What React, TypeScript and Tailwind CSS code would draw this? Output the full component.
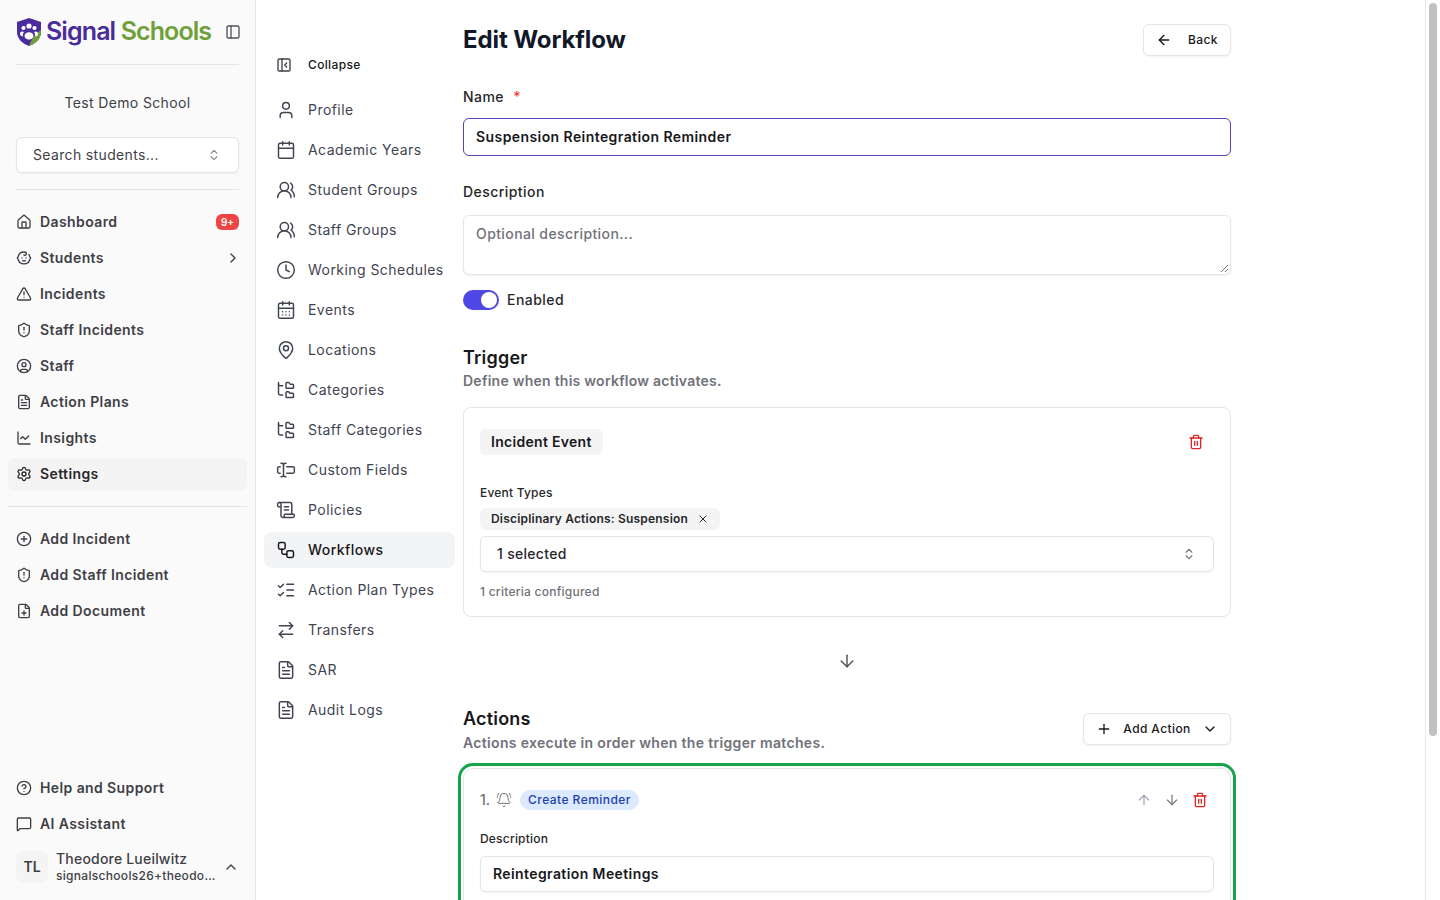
import React from 'react';
import {
  ArrowDown, ArrowLeft, ArrowRightLeft, ArrowUp, Baby, BellRing, Calendar, CalendarDays, ChartLine, ChevronDown,
  ChevronRight, ChevronUp, ChevronsUpDown, CircleHelp, CirclePlus, CircleUser, Clock, FilePlus, FileText, FolderTree,
  House, ListChecks, MapPin, MessageSquare, PanelLeft, PanelLeftClose, Plus, ScrollText, Settings, ShieldAlert,
  TextCursorInput, Trash2, TriangleAlert, User, UsersRound, Workflow, X,
} from 'lucide-react';

const mainNav = [
  { label: 'Dashboard', icon: House },
  { label: 'Students', icon: Baby },
  { label: 'Incidents', icon: TriangleAlert },
  { label: 'Staff Incidents', icon: ShieldAlert },
  { label: 'Staff', icon: CircleUser },
  { label: 'Action Plans', icon: FileText },
  { label: 'Insights', icon: ChartLine },
  { label: 'Settings', icon: Settings },
];

const addNav = [
  { label: 'Add Incident', icon: CirclePlus },
  { label: 'Add Staff Incident', icon: ShieldAlert },
  { label: 'Add Document', icon: FilePlus },
];

const footerNav = [
  { label: 'Help and Support', icon: CircleHelp },
  { label: 'AI Assistant', icon: MessageSquare },
];

const settingsNav = [
  { label: 'Profile', icon: User },
  { label: 'Academic Years', icon: Calendar },
  { label: 'Student Groups', icon: UsersRound },
  { label: 'Staff Groups', icon: UsersRound },
  { label: 'Working Schedules', icon: Clock },
  { label: 'Events', icon: CalendarDays },
  { label: 'Locations', icon: MapPin },
  { label: 'Categories', icon: FolderTree },
  { label: 'Staff Categories', icon: FolderTree },
  { label: 'Custom Fields', icon: TextCursorInput },
  { label: 'Policies', icon: ScrollText },
  { label: 'Workflows', icon: Workflow },
  { label: 'Action Plan Types', icon: ListChecks },
  { label: 'Transfers', icon: ArrowRightLeft },
  { label: 'SAR', icon: FileText },
  { label: 'Audit Logs', icon: FileText },
];

const SideLink: React.FC<{ label: string; icon: React.ElementType; active?: boolean; children?: React.ReactNode }> = ({ label, icon: Icon, active, children }) => (
  <div className={`flex h-8 items-center gap-2 rounded-md px-2 text-sm font-semibold tracking-[0.4px] ${active ? 'bg-[#f4f4f5] text-[#27272a]' : 'text-[#3f3f46]'}`}>
    <Icon size={16} strokeWidth={2} className="shrink-0" />
    <span className="flex-1 truncate">{label}</span>
    {children}
  </div>
);

const Logo = () => (
  <svg width="26" height="30" viewBox="0 0 26 30" className="shrink-0">
    <path d="M13 1 L25 5 V15 C25 22 19 27 13 29 C7 27 1 22 1 15 V5 Z" fill="#4a2c9c" />
    <path d="M25 13 V15 C25 22 19 27 13 29 C15 23 19 17 25 13 Z" fill="#6fa03a" />
    <circle cx="13" cy="9" r="2.6" fill="#fff" />
    <circle cx="7.5" cy="11" r="2.1" fill="#fff" />
    <circle cx="18.5" cy="11" r="2.1" fill="#fff" />
    <path d="M8.5 19 C8.5 14 17.5 14 17.5 19 C17.5 21 15 22.5 13 22.5 C11 22.5 8.5 21 8.5 19 Z" fill="#fff" />
    <path d="M4 17 C4 14 7 14 8 15 C7 16 6.6 18 7 19.5 C5.5 19.5 4 18.5 4 17 Z" fill="#fff" />
    <path d="M22 17 C22 14 19 14 18 15 C19 16 19.4 18 19 19.5 C20.5 19.5 22 18.5 22 17 Z" fill="#fff" />
  </svg>
);

const Sidebar = () => (
  <aside className="flex h-full w-[256px] shrink-0 flex-col border-r border-[#e5e5e5] bg-[#fafafa]">
    <div className="mx-4 flex h-[65px] items-center border-b border-[#e5e5e5] pb-[1px]">
      <Logo />
      <span className="ml-[4px] text-[25px] font-semibold tracking-[-0.9px] whitespace-nowrap text-[#4a2c9c]">
        Signal <span className="text-[#6fa03a]">Schools</span>
      </span>
      <PanelLeft size={16} strokeWidth={2} className="-mr-[2px] ml-auto text-[#52525b]" />
    </div>
    <div className="mt-[28px] text-center text-sm leading-5 tracking-[0.35px] text-[#3f3f46]">Test Demo School</div>
    <div className="mx-4 mt-[24px] flex h-9 items-center justify-between rounded-md border border-[#e5e5e5] bg-white pr-[17px] pl-4 text-sm tracking-[0.35px] text-[#3f3f46] shadow-xs">
      Search students...
      <ChevronsUpDown size={14} className="text-[#8a8a93]" />
    </div>
    <div className="mx-4 mt-4 border-t border-[#e5e5e5]" />
    <nav className="mt-4 flex flex-col gap-1 px-2">
      {mainNav.map((item) => (
        <SideLink key={item.label} label={item.label} icon={item.icon} active={item.label === 'Settings'}>
          {item.label === 'Dashboard' && <span className="rounded-md bg-[#ef4444] px-[5px] text-[10px] leading-4 font-semibold tracking-normal text-white">9+</span>}
          {item.label === 'Students' && <ChevronRight size={16} className="-mr-[2px] text-[#3f3f46]" />}
        </SideLink>
      ))}
    </nav>
    <div className="mx-2 mt-4 border-t border-[#e5e5e5]" />
    <nav className="mt-4 flex flex-col gap-1 px-2">
      {addNav.map((item) => <SideLink key={item.label} label={item.label} icon={item.icon} />)}
    </nav>
    <nav className="mt-auto flex flex-col gap-1 px-2">
      {footerNav.map((item) => <SideLink key={item.label} label={item.label} icon={item.icon} />)}
    </nav>
    <div className="mt-[10px] mb-[16px] flex items-center gap-2 px-4">
      <div className="flex size-8 shrink-0 items-center justify-center rounded-lg bg-[#f4f4f5] text-sm font-semibold text-[#3f3f46]">TL</div>
      <div className="min-w-0 flex-1">
        <div className="text-sm leading-[18px] font-medium tracking-[0.2px] whitespace-nowrap text-[#3f3f46]">Theodore Lueilwitz</div>
        <div className="text-xs leading-4 font-medium tracking-[0.3px] whitespace-nowrap text-[#3f3f46]">signalschools26+theodo…</div>
      </div>
      <ChevronUp size={16} className="ml-1 shrink-0 text-[#3f3f46]" />
    </div>
  </aside>
);

const SettingsNav = () => (
  <nav className="flex w-[191px] shrink-0 flex-col">
    <div className="mt-[49px] mb-[11px] flex h-8 items-center gap-4 px-3 text-xs font-medium tracking-[0.35px] text-[#18181b]">
      <PanelLeftClose size={16} className="shrink-0 text-[#3f3f46]" />
      <span>Collapse</span>
    </div>
    <div className="flex flex-col gap-1">
      {settingsNav.map(({ label, icon: Icon }) => (
        <div key={label} className={`flex h-9 items-center gap-3 rounded-lg px-3 text-sm tracking-[0.45px] ${label === 'Workflows' ? 'bg-[#f3f4f6] font-medium text-[#18181b]' : 'text-[#3f4451]'}`}>
          <Icon size={20} strokeWidth={1.75} className="shrink-0" />
          <span className="whitespace-nowrap">{label}</span>
        </div>
      ))}
    </div>
  </nav>
);

const fieldLabel = 'text-sm leading-5 font-medium tracking-[0.45px] text-[#27272a]';
const smallButton = 'flex h-8 items-center rounded-md border border-[#e5e5e5] bg-white text-xs font-medium tracking-[0.4px] text-[#18181b] shadow-xs';

const Editor = () => (
  <main className="ml-2 w-[768px] shrink-0 pt-6">
    <div className="flex h-8 items-center justify-between">
      <h1 className="text-2xl font-bold tracking-[-0.1px] text-[#111827]">Edit Workflow</h1>
      <button className={`${smallButton} w-[88px] gap-4 px-3`}>
        <ArrowLeft size={16} strokeWidth={2} />
        Back
      </button>
    </div>

    <div className={`mt-[31px] ${fieldLabel}`}>Name <span className="ml-[5px] text-[#ef4444]">*</span></div>
    <div className="mt-[11px] flex h-[38px] items-center rounded-md border border-[#4f46b8] bg-white px-3 text-sm font-semibold tracking-[0.42px] text-[#18181b]">
      Suspension Reintegration Reminder
    </div>

    <div className={`mt-[26px] ${fieldLabel}`}>Description</div>
    <div className="relative mt-[13px] h-[60px] rounded-md border border-[#e5e5e5] bg-white px-3 pt-[8px] text-sm font-medium tracking-[0.4px] text-[#71717a] shadow-xs">
      Optional description...
      <svg width="10" height="10" viewBox="0 0 10 10" className="absolute right-[1px] bottom-[1px] text-[#71717a]">
        <path d="M9 2 L2 9 M9 6 L6 9" stroke="currentColor" strokeWidth="1" />
      </svg>
    </div>

    <div className="mt-[15px] flex items-center gap-2">
      <div className="flex h-5 w-9 items-center justify-end rounded-full bg-[#4f46e5] p-[2px]">
        <div className="size-4 rounded-full bg-white" />
      </div>
      <span className={fieldLabel}>Enabled</span>
    </div>

    <h2 className="mt-[34px] text-lg leading-[27px] font-semibold tracking-[0.2px] text-[#18181b]">Trigger</h2>
    <p className="text-sm leading-5 font-semibold tracking-[0.25px] text-[#71717a]">Define when this workflow activates.</p>

    <section className="mt-4 h-[210px] rounded-lg border border-[#e5e5e5] bg-white px-4 pt-[21px]">
      <div className="flex items-center justify-between pr-[10px]">
        <span className="rounded-md bg-[#f4f4f5] px-[11px] py-[3px] text-sm leading-5 font-semibold tracking-[0.3px] text-[#18181b]">Incident Event</span>
        <Trash2 size={16} className="text-[#dc2626]" />
      </div>
      <div className="mt-[30px] text-xs leading-4 font-medium tracking-[0.2px] text-[#27272a]">Event Types</div>
      <div className="mt-[7px] flex h-[22px] w-fit items-center gap-[9px] rounded-md bg-[#f4f4f5] pr-[11px] pl-[11px] text-xs font-semibold tracking-[0.2px] text-[#27272a]">
        Disciplinary Actions: Suspension
        <X size={12} />
      </div>
      <div className="mt-[6px] flex h-9 items-center justify-between rounded-md border border-[#e5e5e5] bg-white pr-[17px] pl-4 text-sm font-medium tracking-[0.3px] text-[#27272a] shadow-xs">
        1 selected
        <ChevronsUpDown size={14} className="text-[#71717a]" />
      </div>
      <div className="mt-[12px] text-xs leading-4 font-medium tracking-[0.25px] text-[#71717a]">1 criteria configured</div>
    </section>

    <div className="mt-[34px] flex justify-center">
      <ArrowDown size={20} strokeWidth={1.75} className="text-[#52525b]" />
    </div>

    <div className="mt-[34px] flex items-end justify-between">
      <div>
        <h2 className="text-lg leading-7 font-semibold tracking-[0.2px] text-[#18181b]">Actions</h2>
        <p className="text-sm leading-5 font-semibold tracking-[0.33px] text-[#71717a]">Actions execute in order when the trigger matches.</p>
      </div>
      <button className={`${smallButton} mb-2 w-[148px] justify-between px-3`}>
        <Plus size={16} strokeWidth={2} />
        Add Action
        <ChevronDown size={16} strokeWidth={2} />
      </button>
    </div>

    <section className="mt-[15px] h-[300px] rounded-[10px] border border-[#e5e5e5] bg-white px-4 pt-[21px] outline-[3px] outline-offset-2 outline-[#16a34a]">
      <div className="flex h-5 items-center">
        <span className="text-sm font-medium text-[#71717a]">1.</span>
        <BellRing size={16} strokeWidth={1.5} className="ml-[6px] text-[#71717a]" />
        <span className="ml-[8px] rounded-full bg-[#dbeafe] px-2 text-xs leading-5 font-medium tracking-[0.45px] text-[#1e40af]">Create Reminder</span>
        <div className="ml-auto flex items-center gap-3 pr-[6px]">
          <ArrowUp size={16} strokeWidth={1.75} className="text-[#9ca3af]" />
          <ArrowDown size={16} strokeWidth={1.75} className="text-[#71717a]" />
          <Trash2 size={16} className="text-[#dc2626]" />
        </div>
      </div>
      <div className="mt-[21px] text-xs leading-4 font-medium tracking-[0.2px] text-[#27272a]">Description</div>
      <div className="mt-[9px] flex h-9 items-center rounded-md border border-[#e5e5e5] bg-white px-3 text-sm font-semibold tracking-[0.4px] text-[#18181b] shadow-xs">
        Reintegration Meetings
      </div>
    </section>
  </main>
);

export default function App() {
  return (
    <div className="flex h-screen overflow-hidden bg-white font-['Inter',sans-serif]">
      <Sidebar />
      <div className="flex min-w-0 flex-1 pl-2">
        <SettingsNav />
        <Editor />
      </div>
      <div className="w-[15px] shrink-0 border-l border-[#e8e8e8] bg-white pt-[3px] pr-[3px] pl-[3px]">
        <div className="h-[733px] rounded-full bg-[#c1c1c1]" />
      </div>
    </div>
  );
}
